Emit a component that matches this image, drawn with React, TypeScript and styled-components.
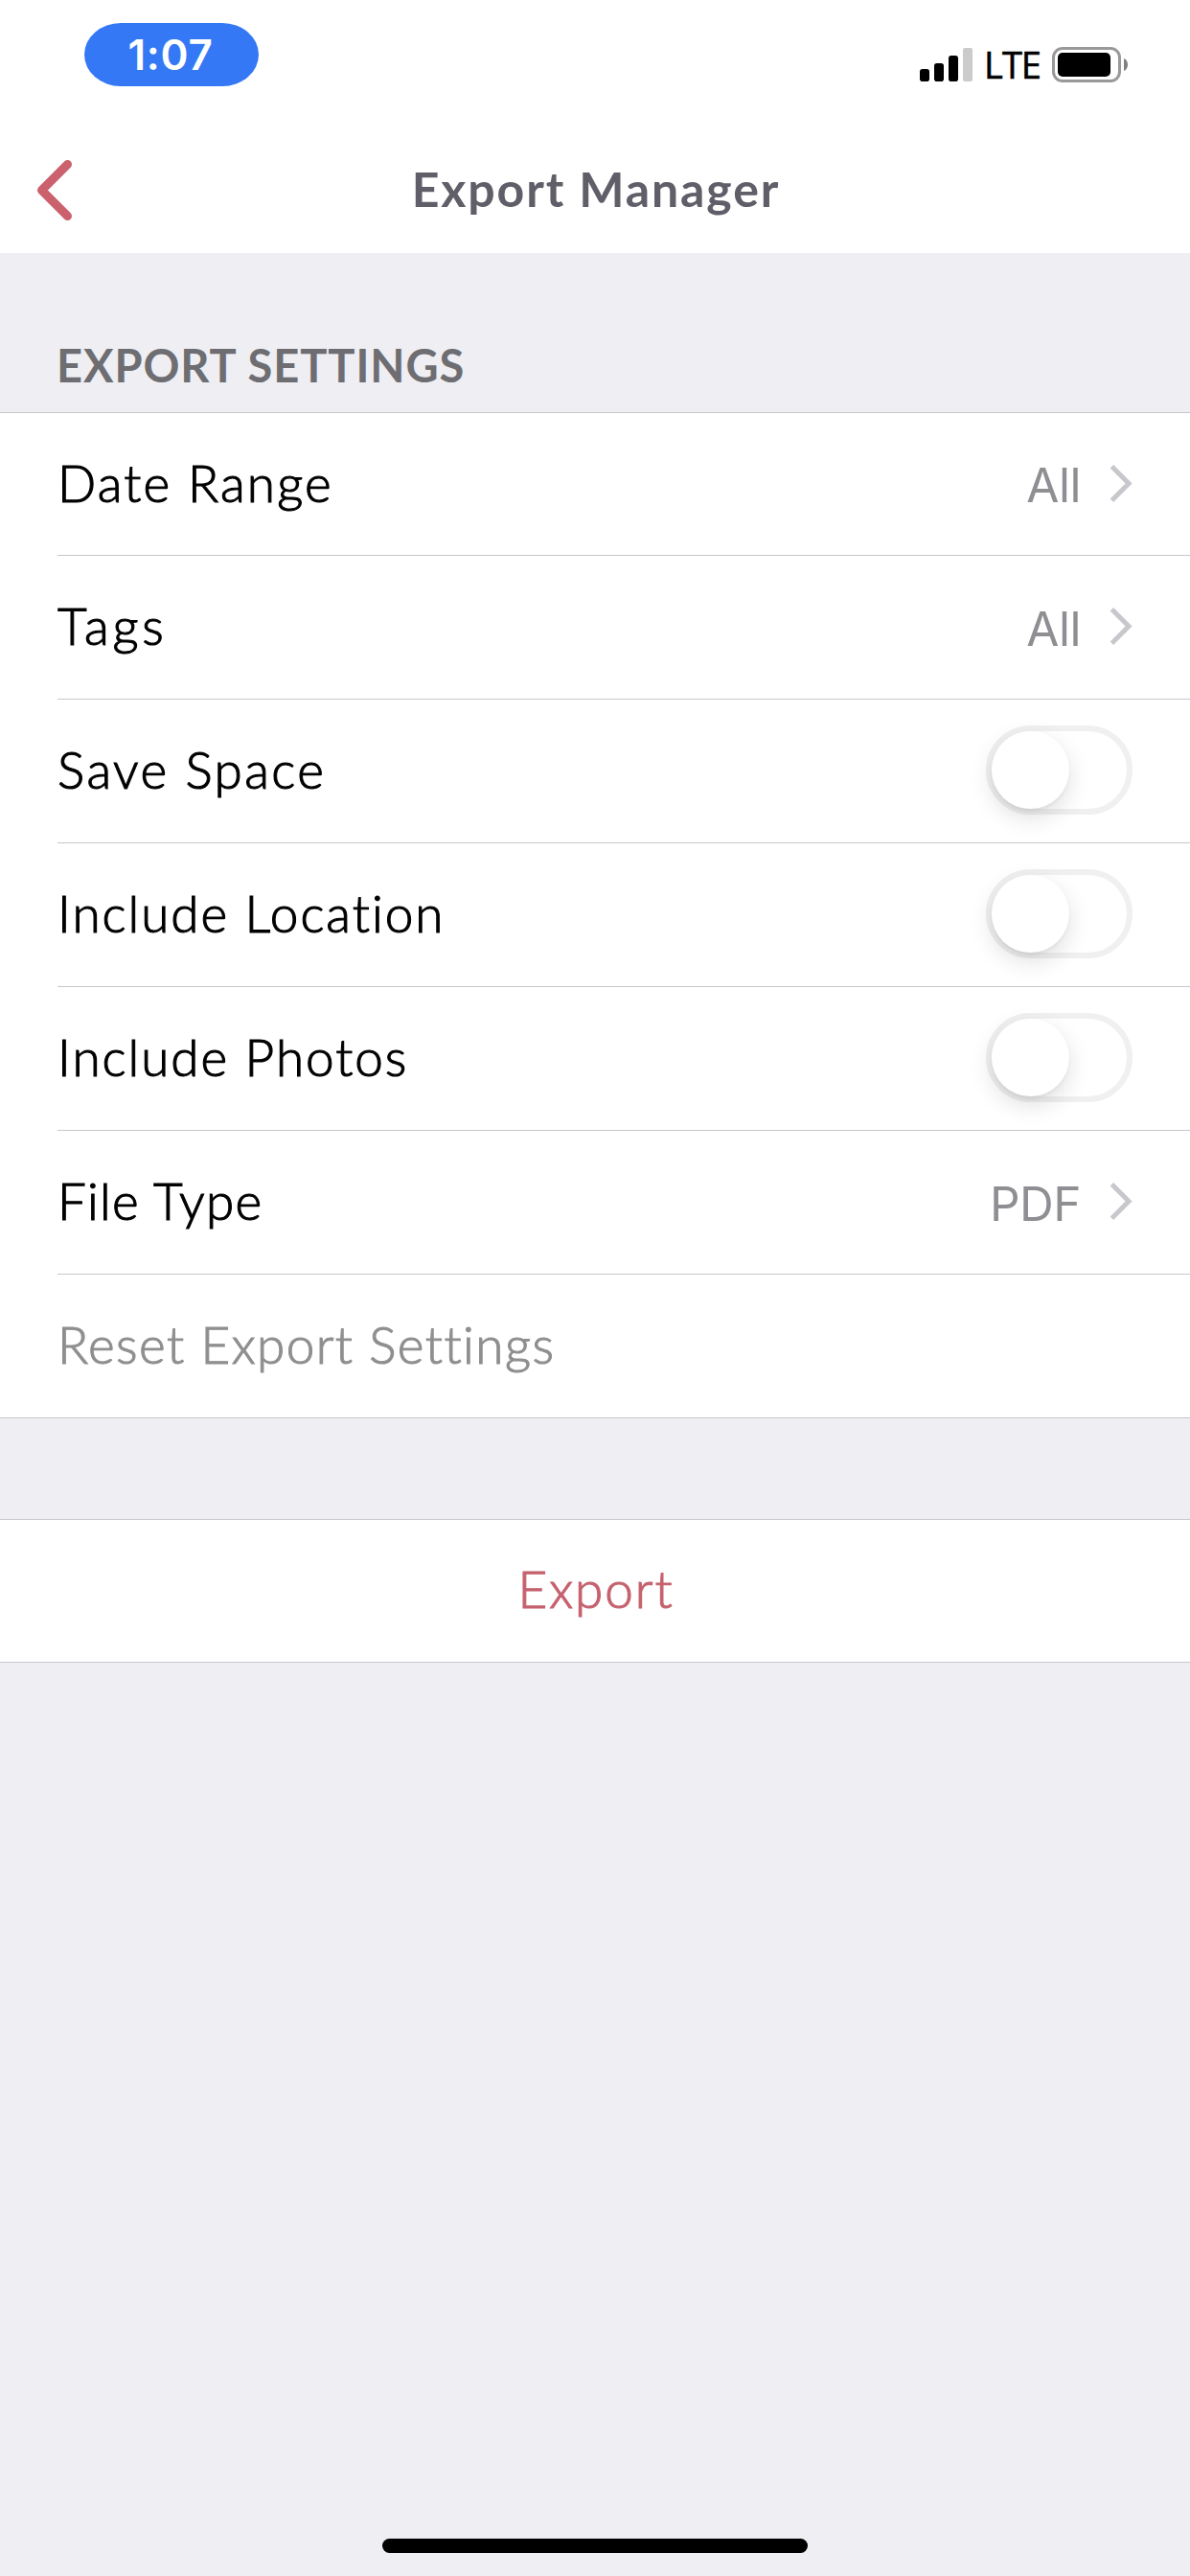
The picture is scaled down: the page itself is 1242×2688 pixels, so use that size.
import React from "react";
import styled, { createGlobalStyle } from "styled-components";

const GlobalStyle = createGlobalStyle`
  *, *::before, *::after { box-sizing: border-box; }
  body {
    margin: 0;
    background: #eeeef3;
    font-family: Lato, "Open Sans", sans-serif;
    font-variant-ligatures: no-common-ligatures;
  }
`;

const Screen = styled.main`
  display: flex;
  flex-direction: column;
  width: 1242px;
  height: 2688px;
  background: #eeeef3;
`;

/* Status bar */

const StatusBar = styled.header`
  display: flex;
  justify-content: space-between;
  align-items: flex-start;
  height: 132px;
  padding: 24px 64px 0 88px;
  background: #fff;
`;

const TimePill = styled.div`
  display: flex;
  align-items: center;
  justify-content: center;
  width: 182px;
  height: 66px;
  padding-right: 2px;
  border-radius: 38px / 33px;
  background: #3478f6;
  color: #fff;
  font: 600 44px/1 Inter, sans-serif;
  font-variant-ligatures: normal;
  letter-spacing: 0.7px;
`;

const StatusIcons = styled.div`
  display: flex;
  align-items: center;
  height: 37px;
  margin-top: 25px;
`;

const Carrier = styled.span`
  width: 83px;
  text-align: center;
  color: #000;
  font: 500 38px/37px "Open Sans", sans-serif;
  letter-spacing: -1px;
  -webkit-text-stroke: 0.6px currentColor;
`;

/* Navigation bar */

const NavBar = styled.nav`
  display: grid;
  grid-template-columns: 1fr auto 1fr;
  align-items: center;
  height: 132px;
  padding: 0 37px;
  background: #fff;
`;

const BackButton = styled.button`
  justify-self: start;
  display: flex;
  padding: 0;
  border: 0;
  background: none;
`;

const Title = styled.h1`
  margin: 0;
  padding: 0 0 2px 2px;
  color: #605f69;
  font-size: 50px;
  font-weight: 700;
  line-height: 60px;
  letter-spacing: 1.88px;
`;

/* Lists */

const SectionHeader = styled.h2`
  display: flex;
  align-items: flex-end;
  height: 166px;
  margin: 0;
  padding: 0 0 21px 59px;
  color: #6d6d72;
  font-size: 47px;
  font-weight: 700;
  line-height: 56px;
  letter-spacing: 0.92px;
`;

const Group = styled.section`
  background: #fff;
  border-top: 1px solid #c8c7cc;
  border-bottom: 1px solid #c8c7cc;

  & + & {
    margin-top: 105px;
  }
`;

const Row = styled.div`
  display: flex;
  align-items: center;
  height: 150px;
  margin-left: 60px;
  padding: 0 60px 2px 0;
  border-bottom: 1px solid #c8c7cc;

  &:first-child {
    height: 149px;
  }
  &:last-child {
    height: 149px;
    border-bottom: 0;
  }
`;

const Label = styled.span<{ $tracking: number; $muted?: boolean }>`
  flex: 1;
  padding-bottom: 1px;
  color: ${(p) => (p.$muted ? "#8f8f8f" : "#000")};
  font-size: 53px;
  font-weight: 300;
  line-height: 64px;
  letter-spacing: ${(p) => p.$tracking}px;
  -webkit-text-stroke: 1.1px currentColor;
`;

const Value = styled.span`
  margin-right: 30px;
  padding-top: 4px;
  color: #8e8e93;
  font: 400 49.5px/60px Inter, sans-serif;
  letter-spacing: -0.5px;
`;

const Switch = styled.span`
  display: flex;
  width: 153px;
  height: 93px;
  border: 6px solid #f0f0f0;
  border-radius: 47px;
  background: #fff;
`;

const Knob = styled.span`
  width: 81px;
  height: 81px;
  border-radius: 50%;
  background: #fff;
  box-shadow: 0 9px 24px rgba(0, 0, 0, 0.13), 0 3px 3px rgba(0, 0, 0, 0.04);
`;

const ExportButton = styled.button`
  display: flex;
  align-items: center;
  justify-content: center;
  width: 100%;
  height: 148px;
  padding: 0 0 5px 2px;
  border: 0;
  background: none;
  color: #c5626e;
  font: 300 53px/64px Lato, sans-serif;
  letter-spacing: 1.95px;
  -webkit-text-stroke: 1.1px currentColor;
`;

const HomeIndicator = styled.div`
  width: 444px;
  height: 15px;
  margin: auto auto 24px;
  border-radius: 8px;
  background: #000;
`;

const Signal = () => (
  <svg width="55" height="35" viewBox="0 0 55 35">
    <rect x="0" y="22" width="10" height="13" rx="2.8" />
    <rect x="15" y="16" width="10" height="19" rx="2.8" />
    <rect x="30" y="8" width="10" height="27" rx="2.8" />
    <rect x="45" y="0" width="10" height="35" rx="2" fill="#cbcbcb" />
  </svg>
);

const Battery = () => (
  <svg width="80" height="37" viewBox="0 0 80 37">
    <rect x="1.5" y="1.5" width="69" height="34" rx="9.5" fill="none" stroke="#999" strokeWidth="3" />
    <rect x="6" y="6" width="55" height="25" rx="5" />
    <path d="M75 12c2.6 1.1 4 3.600 4 6.500s-1.400 5.400-4 6.500z" fill="#808080" />
  </svg>
);

const BackIcon = () => (
  <svg width="40" height="66" viewBox="0 0 40 66" fill="none">
    <path
      d="M33.5 6.500 6.500 33.500l27 27"
      stroke="#cc616e"
      strokeWidth="9"
      strokeLinecap="round"
      strokeLinejoin="round"
    />
  </svg>
);

const Disclosure = () => (
  <svg width="24" height="41" viewBox="0 0 24 41" fill="none">
    <path d="M2.400 2.800 20.100 20.500 2.400 38.200" stroke="#c7c7cc" strokeWidth="5" />
  </svg>
);

type Setting = {
  label: string;
  tracking: number;
  value?: string;
  toggle?: boolean;
  muted?: boolean;
};

const settings: Setting[] = [
  { label: "Date Range", tracking: 2.2, value: "All" },
  { label: "Tags", tracking: 3.7, value: "All" },
  { label: "Save Space", tracking: 2.45, toggle: true },
  { label: "Include Location", tracking: 2, toggle: true },
  { label: "Include Photos", tracking: 2, toggle: true },
  { label: "File Type", tracking: 1.25, value: "PDF" },
  { label: "Reset Export Settings", tracking: 1.45, muted: true },
];

export default function App() {
  return (
    <Screen>
      <GlobalStyle />
      <StatusBar>
        <TimePill>1:07</TimePill>
        <StatusIcons>
          <Signal />
          <Carrier>LTE</Carrier>
          <Battery />
        </StatusIcons>
      </StatusBar>
      <NavBar>
        <BackButton aria-label="Back">
          <BackIcon />
        </BackButton>
        <Title>Export Manager</Title>
      </NavBar>
      <SectionHeader>EXPORT SETTINGS</SectionHeader>
      <Group>
        {settings.map((s) => (
          <Row key={s.label}>
            <Label $tracking={s.tracking} $muted={s.muted}>
              {s.label}
            </Label>
            {s.value && (
              <>
                <Value>{s.value}</Value>
                <Disclosure />
              </>
            )}
            {s.toggle && (
              <Switch role="switch" aria-checked={false} aria-label={s.label}>
                <Knob />
              </Switch>
            )}
          </Row>
        ))}
      </Group>
      <Group>
        <ExportButton>Export</ExportButton>
      </Group>
      <HomeIndicator />
    </Screen>
  );
}
